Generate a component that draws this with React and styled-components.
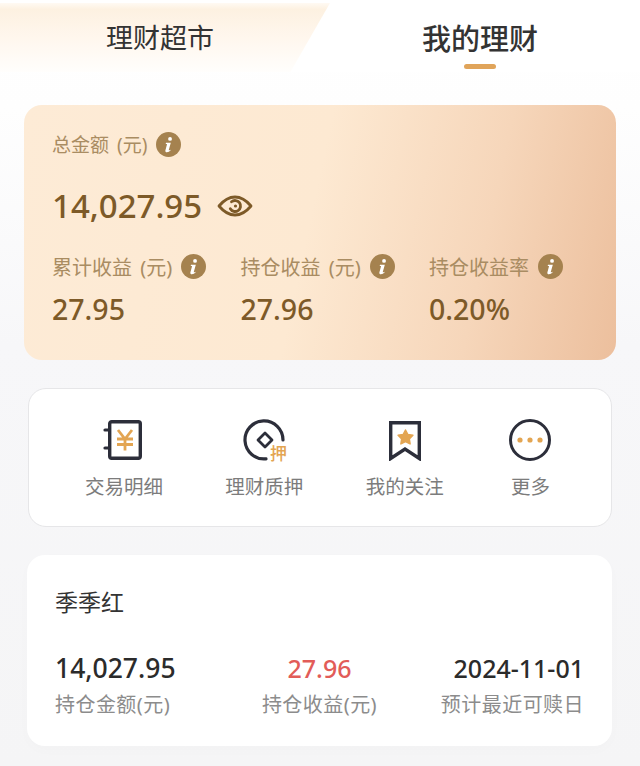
import React from 'react';
import styled, { createGlobalStyle } from 'styled-components';

const GOLD = '#e3a552';
const INK = '#2c2e3a';

const GlobalStyle = createGlobalStyle`
  html, body {
    margin: 0;
    padding: 0;
    height: 100%;
    overflow: hidden;
    font-family: "Noto Sans", "Noto Sans CJK SC", sans-serif;
  }
  * { box-sizing: border-box; }
`;

const InfoIcon = () => (
  <InfoSvg viewBox="0 0 26 26">
    <circle cx="13" cy="13" r="13" fill="#a5824f" />
    <circle cx="14.6" cy="7.2" r="2" fill="#fff" />
    <path d="M10.4 11.2h5l-2.1 7.600c-.1.5.3.6.7.3l.9-.7.4.7c-1.2 1.400-2.500 2-3.900 2-1.300 0-2-.8-1.600-2.100l1.600-5.900c.1-.4-.1-.5-.5-.5h-.8z" fill="#fff" />
  </InfoSvg>
);

const EyeIcon = () => (
  <svg width="36" height="26" viewBox="0 0 36 26" fill="none" stroke="#7d5a28" strokeWidth="2.8">
    <path d="M2 13C7 7 12 4 18 4s11 3 16 9c-5 6-10 9-16 9S7 19 2 13z" strokeLinejoin="round" />
    <path d="M14.500 8.800a5.500 5.500 0 1 1-1.200 7" strokeLinecap="round" />
    <circle cx="18.500" cy="13" r="1.600" fill="#7d5a28" stroke="none" />
  </svg>
);

const LedgerIcon = () => (
  <svg width="42" height="42" viewBox="0 0 42 42" fill="none">
    <rect x="6.700" y="2.700" width="30.600" height="36.600" rx="2" stroke={INK} strokeWidth="3.400" />
    <path d="M2 11h4M2 29h4" stroke={INK} strokeWidth="3.200" strokeLinecap="round" />
    <path d="M15 11l7 9 7-9M14 20h16M14 25.500h16M22 20v11.500" stroke={GOLD} strokeWidth="2.800" />
  </svg>
);

const PledgeIcon = () => (
  <svg width="48" height="48" viewBox="0 0 48 48" fill="none">
    <path d="M26 39.800A19 19 0 1 1 43 21" stroke={INK} strokeWidth="3.200" strokeLinecap="round" />
    <path d="M25 14l7 7-7 7-7-7z" stroke={INK} strokeWidth="2.800" strokeLinejoin="round" />
    <PledgeGlyph x="30" y="41">押</PledgeGlyph>
  </svg>
);

const MarkIcon = () => (
  <svg width="36" height="42" viewBox="0 0 36 42" fill="none">
    <path d="M3.700 3.700h28.600V39.500L18 30 3.700 39.500z" stroke={INK} strokeWidth="3.400" strokeLinejoin="miter" />
    <path d="M18.500 11l2.400 4.500 5 .8-3.600 3.600.8 5-4.600-2.300-4.600 2.300.8-5-3.600-3.600 5-.8z" fill={GOLD} stroke={GOLD} strokeWidth="1.500" strokeLinejoin="round" />
  </svg>
);

const MoreIcon = () => (
  <svg width="42" height="42" viewBox="0 0 42 42" fill="none">
    <circle cx="21" cy="21" r="19.500" stroke={INK} strokeWidth="3" />
    <circle cx="11" cy="21" r="2.600" fill={GOLD} />
    <circle cx="21" cy="21" r="2.600" fill={GOLD} />
    <circle cx="31" cy="21" r="2.600" fill={GOLD} />
  </svg>
);

const stats = [
  { label: '累计收益 (元)', value: '27.95' },
  { label: '持仓收益 (元)', value: '27.96' },
  { label: '持仓收益率', value: '0.20%' },
];

const actions = [
  { label: '交易明细', icon: <LedgerIcon /> },
  { label: '理财质押', icon: <PledgeIcon /> },
  { label: '我的关注', icon: <MarkIcon /> },
  { label: '更多', icon: <MoreIcon /> },
];

const App = () => {
  return (
    <Page>
      <GlobalStyle />
      <Tabs>
        <MarketTab>理财超市</MarketTab>
        <MineTab>
          我的理财
          <TabLine />
        </MineTab>
      </Tabs>

      <Hero>
        <HeroLabel $size={19}>总金额 (元)<InfoIcon /></HeroLabel>
        <TotalRow>
          <Total>14,027.95</Total>
          <EyeIcon />
        </TotalRow>
        <StatGrid>
          {stats.map((s) => (
            <div key={s.label}>
              <HeroLabel>{s.label}<InfoIcon /></HeroLabel>
              <StatValue>{s.value}</StatValue>
            </div>
          ))}
        </StatGrid>
      </Hero>

      <Actions>
        {actions.map((a) => (
          <Action key={a.label}>
            <IconSlot>{a.icon}</IconSlot>
            <ActionLabel>{a.label}</ActionLabel>
          </Action>
        ))}
      </Actions>

      <Holding>
        <HoldingName>季季红</HoldingName>
        <HoldingRow>
          <HoldingCol>
            <HoldingValue $large>14,027.95</HoldingValue>
            <HoldingLabel>持仓金额(元)</HoldingLabel>
          </HoldingCol>
          <HoldingCol $align="center">
            <HoldingValue $red>27.96</HoldingValue>
            <HoldingLabel>持仓收益(元)</HoldingLabel>
          </HoldingCol>
          <HoldingCol $align="flex-end">
            <HoldingValue>2024-11-01</HoldingValue>
            <HoldingLabel>预计最近可赎日</HoldingLabel>
          </HoldingCol>
        </HoldingRow>
      </Holding>
    </Page>
  );
};

const Page = styled.div`
  width: 640px;
  height: 766px;
  overflow: hidden;
  background: linear-gradient(180deg, #fff 0%, #fefefe 14%, #f7f7f9 45%, #f5f5f6 100%);
`;

const Tabs = styled.div`
  display: flex;
  height: 72px;
  padding-top: 3px;
  background: #fff;
`;

const MarketTab = styled.div`
  width: 330px;
  padding: 16px 10px 0 0;
  text-align: center;
  font-size: 27px;
  line-height: 38px;
  color: #333;
  background: linear-gradient(180deg, #fffaf3 0%, #fdf1e1 9%, #fff7ee 52%, #fffefc 100%);
  clip-path: polygon(0 0, 100% 0, 88% 100%, 0 100%);
`;

const MineTab = styled.div`
  flex: 1;
  display: flex;
  flex-direction: column;
  align-items: center;
  padding: 16px 10px 0 0;
  font-size: 29px;
  line-height: 40px;
  font-weight: 500;
  color: #333;
`;

const TabLine = styled.span`
  width: 32px;
  height: 5px;
  margin-top: 5px;
  border-radius: 3px;
  background: #e0a45a;
`;

const Hero = styled.section`
  height: 255px;
  margin: 33px 24px 0;
  padding: 25px 27px 0 28px;
  border-radius: 18px;
  background: linear-gradient(102deg, #fdebd6 0%, #fde9d2 48%, #f6d6ba 76%, #ecbf9d 100%);
`;

const HeroLabel = styled.div`
  display: flex;
  align-items: center;
  gap: 9px;
  height: 28px;
  font-size: ${(p) => p.$size || 20}px;
  word-spacing: 3px;
  color: #a98c62;
  white-space: nowrap;
`;

const InfoSvg = styled.svg`
  width: 25px;
  height: 25px;
  flex-shrink: 0;
`;

const TotalRow = styled.div`
  display: flex;
  align-items: center;
  gap: 15px;
  margin-top: 28px;
  height: 40px;
`;

const Total = styled.div`
  font-size: 33px;
  line-height: 40px;
  font-weight: 500;
  color: #7d5a28;
`;

const StatGrid = styled.div`
  display: grid;
  grid-template-columns: repeat(3, 188.5px);
  margin-top: 26px;
`;

const StatValue = styled.div`
  margin-top: 11px;
  font-size: 28.500px;
  line-height: 36px;
  font-weight: 500;
  color: #7d5a28;
`;

const Actions = styled.section`
  display: flex;
  gap: 62.300px;
  height: 139px;
  margin: 28px 28px 0;
  padding: 30px 0 0 56px;
  border: 1px solid #e6e6e8;
  border-radius: 18px;
  background: #fff;
`;

const Action = styled.div`
  display: flex;
  flex-direction: column;
  align-items: center;
  &:last-child {
    margin-left: 3.500px;
  }
`;

const IconSlot = styled.div`
  display: flex;
  align-items: flex-start;
  justify-content: center;
  height: 42px;
`;

const ActionLabel = styled.div`
  margin-top: 12px;
  font-size: 19.500px;
  line-height: 28px;
  color: #7c7c7c;
  white-space: nowrap;
`;

const PledgeGlyph = styled.text`
  font-size: 17px;
  font-weight: 500;
  fill: ${GOLD};
`;

const Holding = styled.section`
  height: 191px;
  margin: 28px 28px 0 27px;
  padding: 30px 28px 0;
  border-radius: 18px;
  background: #fff;
  box-shadow: 0 4px 14px rgba(0, 0, 0, 0.015);
`;

const HoldingName = styled.div`
  font-size: 23px;
  line-height: 34px;
  color: #333;
`;

const HoldingRow = styled.div`
  display: grid;
  grid-template-columns: 1fr auto 1fr;
  margin-top: 32px;
`;

const HoldingCol = styled.div`
  display: flex;
  flex-direction: column;
  align-items: ${(p) => p.$align || 'flex-start'};
`;

const HoldingValue = styled.div`
  font-size: ${(p) => (p.$large ? '26.500px' : '25px')};
  line-height: 34px;
  font-weight: 500;
  color: ${(p) => (p.$red ? '#e25c58' : '#2b2b2b')};
`;

const HoldingLabel = styled.div`
  margin-top: 5px;
  font-size: 20px;
  line-height: 30px;
  letter-spacing: 0.450px;
  color: #8c8c8c;
  white-space: nowrap;
`;

export default App;
